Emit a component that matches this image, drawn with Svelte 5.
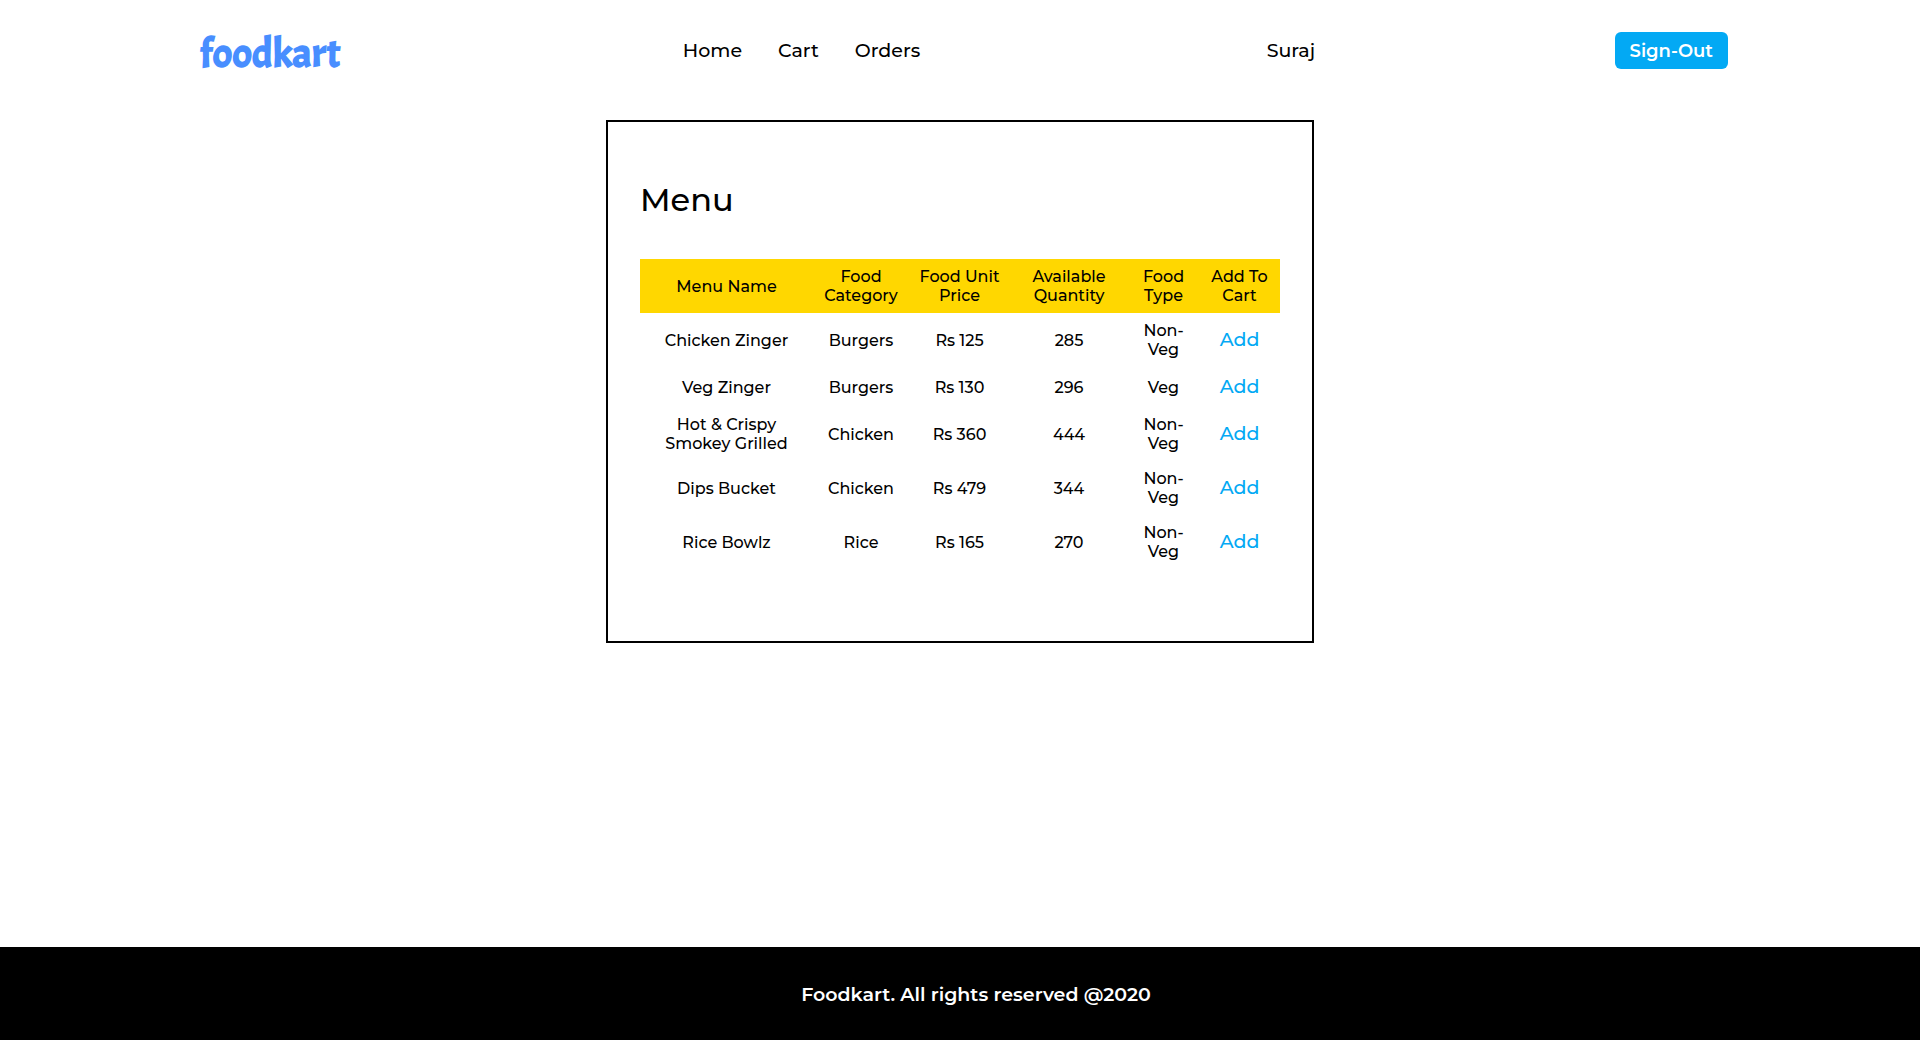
<script>
  const links = ['Home', 'Cart', 'Orders'];
  const columns = ['Menu Name', 'Food Category', 'Food Unit Price', 'Available Quantity', 'Food Type', 'Add To Cart'];
  const items = [
    { name: 'Chicken Zinger', category: 'Burgers', price: 125, quantity: 285, type: 'Non-Veg' },
    { name: 'Veg Zinger', category: 'Burgers', price: 130, quantity: 296, type: 'Veg' },
    { name: 'Hot & Crispy Smokey Grilled', category: 'Chicken', price: 360, quantity: 444, type: 'Non-Veg' },
    { name: 'Dips Bucket', category: 'Chicken', price: 479, quantity: 344, type: 'Non-Veg' },
    { name: 'Rice Bowlz', category: 'Rice', price: 165, quantity: 270, type: 'Non-Veg' }
  ];
</script>

<div class="page">
  <header class="bar">
    <a class="logo" href="#home">foodkart</a>
    <nav class="links">
      {#each links as link}
        <a href="#{link.toLowerCase()}">{link}</a>
      {/each}
    </nav>
    <span class="user">Suraj</span>
    <button class="sign-out" type="button">Sign-Out</button>
  </header>

  <main class="content">
    <section class="card">
      <h1>Menu</h1>
      <table>
        <thead>
          <tr>
            {#each columns as column}
              <th scope="col">{column}</th>
            {/each}
          </tr>
        </thead>
        <tbody>
          {#each items as item}
            <tr>
              <td>{item.name}</td>
              <td>{item.category}</td>
              <td>Rs {item.price}</td>
              <td>{item.quantity}</td>
              <td>{item.type}</td>
              <td><a class="add" href="#cart">Add</a></td>
            </tr>
          {/each}
        </tbody>
      </table>
    </section>
  </main>

  <footer class="footer">Foodkart. All rights reserved @2020</footer>
</div>

<style>
  :global(body) {
    margin: 0;
    background: #fff;
  }

  .page {
    display: flex;
    flex-direction: column;
    min-height: 100vh;
    font-family: Montserrat, Inter, sans-serif;
    font-size: 16px;
    font-weight: 500;
    color: #000;
  }

  a {
    color: inherit;
    text-decoration: none;
  }

  .bar {
    display: grid;
    grid-template-columns: 491fr 584fr 348fr auto;
    align-items: center;
    min-height: 101px;
    padding: 0 10%;
    font-size: 19px;
  }

  .logo {
    padding: 6px 0 0 8px;
    font-family: Acme, Lato, sans-serif;
    font-size: 41px;
    font-weight: 700;
    line-height: 44px;
    color: #488eff;
  }

  .links {
    display: flex;
    gap: 36px;
  }

  .sign-out {
    padding: 8px 15px 6px;
    border: 0;
    border-radius: 6px;
    background: #03a9f4;
    color: #fff;
    font: inherit;
    font-size: 18px;
    font-weight: 600;
    line-height: 23px;
    cursor: pointer;
  }

  .content {
    flex: 1;
    padding: 19px 16px 32px;
  }

  .card {
    box-sizing: border-box;
    max-width: 708px;
    margin: 0 auto;
    padding: 58px 32px 72px;
    border: 2px solid #000;
  }

  h1 {
    margin: 0 0 39px;
    font-size: 32px;
    font-weight: 500;
    line-height: 40px;
  }

  table {
    width: 100%;
    table-layout: fixed;
    border-collapse: collapse;
    text-align: center;
    line-height: 19px;
  }

  thead {
    background: #ffd700;
  }

  th,
  td {
    box-sizing: border-box;
    padding: 8px;
    font-weight: 500;
    vertical-align: middle;
  }

  th:nth-child(1) { width: 173px; }
  th:nth-child(2) { width: 96px; }
  th:nth-child(3) { width: 101px; }
  th:nth-child(4) { width: 118px; }
  th:nth-child(5) { width: 71px; }

  td:first-child {
    padding: 8px 20px;
  }

  .add {
    display: block;
    font-size: 19px;
    line-height: 24px;
    color: #03a9f4;
  }

  .footer {
    padding: 36px 0 33px 32px;
    background: #000;
    color: #fff;
    font-size: 19px;
    font-weight: 600;
    line-height: 24px;
    text-align: center;
  }
</style>
